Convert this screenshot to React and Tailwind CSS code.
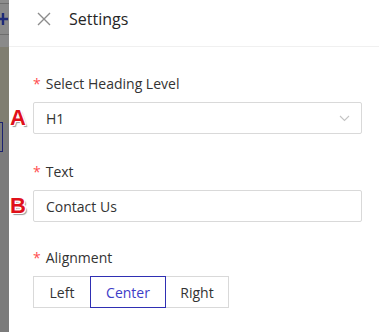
function Badge({ letter }) {
  return (
    <span className="absolute left-[-24px] top-1/2 -translate-y-1/2 font-['Liberation_Sans',sans-serif] text-[22px] font-bold leading-none text-[#e0101a] [text-shadow:1px_1px_0_#fff,-1px_-1px_0_#fff,1px_-1px_0_#fff,-1px_1px_0_#fff,0_1px_0_#fff,1px_0_0_#fff,2px_2px_1px_#9a9a9a]">
      {letter}
    </span>
  )
}

function Label({ children }) {
  return (
    <div className="mb-[7px] flex items-center text-[14px] leading-[22px] text-[#333]">
      <span className="mr-[5px] text-[#ff4d4f]">*</span>
      {children}
    </div>
  )
}

export default function App() {
  return (
    <div className="flex h-[332px] w-[379px] overflow-hidden bg-white font-['Open_Sans',sans-serif]">
      <div className="flex w-[9px] shrink-0 flex-col bg-[#7b7b7b]">
        <div className="h-[3px] bg-[#8d8d8d]" />
        <div className="h-px bg-[#6e6e6e]" />
        <div className="flex h-[30px] items-center bg-[#8a8a8a]">
          <svg width="9" height="14" viewBox="0 0 9 14" className="block">
            <path d="M0 7H8M3 1V13" stroke="#1e2a78" strokeWidth="2.4" />
          </svg>
        </div>
        <div className="h-px bg-[#6e6e6e]" />
        <div className="h-[12px] bg-[#8a8a8a]" />
        <div className="h-[76px] bg-[#807e71]" />
        <div className="mt-[-1px] h-[30px] w-[3px] border border-l-0 border-[#1c2370]" />
      </div>

      <div className="flex flex-1 flex-col">
        <div className="flex h-[47px] items-center border-b border-[#f0f0f0] pb-[8px] pl-[28px]">
          <svg width="14" height="14" viewBox="0 0 14 14" className="shrink-0">
            <path d="M1 1L13 13M13 1L1 13" stroke="#8c8c8c" strokeWidth="1.4" />
          </svg>
          <span className="ml-[18px] text-[16px] text-[#262626]">Settings</span>
        </div>

        <div className="flex flex-col pl-[24px] pr-[17px] pt-[26px]">
          <Label>Select Heading Level</Label>
          <div className="relative flex h-[32px] items-center justify-between rounded-[2px] border border-[#d9d9d9] pl-[12px] pr-[10px] text-[14px] text-[#333]">
            <Badge letter="A" />
            <span>H1</span>
            <svg width="11" height="7" viewBox="0 0 11 7" className="mr-[1px]">
              <path d="M1 1L5.5 5.5L10 1" fill="none" stroke="#c4c4c4" strokeWidth="1.1" />
            </svg>
          </div>

          <div className="mt-[27px]">
            <Label>Text</Label>
          </div>
          <div className="relative flex h-[32px] items-center rounded-[2px] border border-[#d9d9d9] pl-[12px] text-[14px] text-[#333]">
            <Badge letter="B" />
            <span>Contact Us</span>
          </div>

          <div className="mt-[25px]">
            <Label>Alignment</Label>
          </div>
          <div className="flex text-[14px]">
            <div className="flex h-[32px] w-[57px] items-center justify-center border border-r-0 border-[#d9d9d9] text-[#333]">
              Left
            </div>
            <div className="flex h-[32px] w-[76px] items-center justify-center border border-[#2f2fb3] text-[#3d3dc8]">
              Center
            </div>
            <div className="flex h-[32px] w-[63px] items-center justify-center border border-l-0 border-[#d9d9d9] text-[#333]">
              Right
            </div>
          </div>
        </div>
      </div>
    </div>
  )
}
